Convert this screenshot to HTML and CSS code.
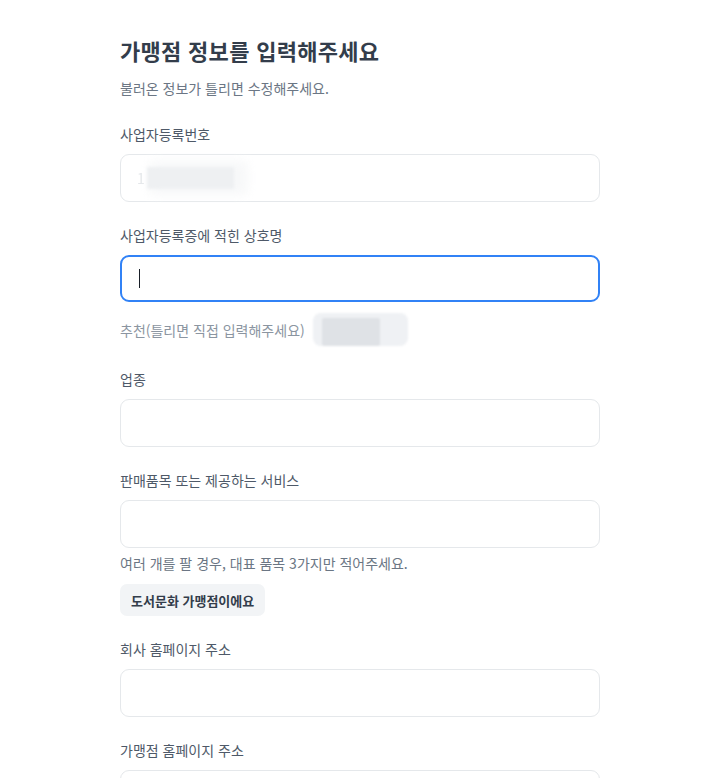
FILE: index.html
```html
<!DOCTYPE html>
<html lang="ko">
<head>
<meta charset="utf-8">
<title>가맹점 정보</title>
<link rel="stylesheet" href="styles.css">
</head>
<body>
<main class="form">
  <h1 class="title">가맹점 정보를 입력해주세요</h1>
  <p class="subtitle">불러온 정보가 틀리면 수정해주세요.</p>

  <section class="field first">
    <div class="label">사업자등록번호</div>
    <div class="input">
      <span class="masked-digit">1</span><span class="masked-block"></span>
    </div>
  </section>

  <section class="field">
    <div class="label">사업자등록증에 적힌 상호명</div>
    <div class="input focused"><span class="caret"></span></div>
    <div class="suggest">
      <span class="suggest-text">추천(틀리면 직접 입력해주세요)</span>
      <span class="suggest-chip"><span class="suggest-chip-inner"></span></span>
    </div>
  </section>

  <section class="field">
    <div class="label">업종</div>
    <div class="input"></div>
  </section>

  <section class="field">
    <div class="label">판매품목 또는 제공하는 서비스</div>
    <div class="input"></div>
    <p class="helper">여러 개를 팔 경우, 대표 품목 3가지만 적어주세요.</p>
    <button class="chip-btn" type="button">도서문화 가맹점이에요</button>
  </section>

  <section class="field">
    <div class="label">회사 홈페이지 주소</div>
    <div class="input"></div>
  </section>

  <section class="field">
    <div class="label">가맹점 홈페이지 주소</div>
    <div class="input"></div>
  </section>
</main>
</body>
</html>
```

FILE: styles.css
```css
* { box-sizing: border-box; }
html, body {
  margin: 0;
  padding: 0;
  background: #ffffff;
  font-family: "Noto Sans CJK KR", "Noto Sans", sans-serif;
}
.form {
  width: 480px;
  margin-left: 120px;
  padding-top: 35px;
  padding-bottom: 40px;
}
.title {
  margin: 0;
  font-size: 22px;
  line-height: 30px;
  font-weight: 700;
  color: #333d4b;
  letter-spacing: 0.3px;
}
.subtitle {
  margin: 13px 0 0;
  font-size: 14px;
  line-height: 20px;
  color: #6b7684;
}
.field { margin-top: 23px; }
.field.first { margin-top: 26px; }
.field.second { margin-top: 24px; }
.label {
  font-size: 14px;
  line-height: 20px;
  color: #4e5968;
  margin-bottom: 10px;
}
.input {
  height: 48px;
  border: 1px solid #e5e8eb;
  border-radius: 9px;
  background: #ffffff;
  display: flex;
  align-items: center;
  padding: 0 16px;
}
.input.focused {
  height: 47px;
  border: 2px solid #3182f6;
  padding: 0 15px;
}
.caret {
  width: 1px;
  height: 19px;
  background: #191f28;
  margin-left: 2px;
}
.masked-digit {
  font-size: 14px;
  color: #e3e6e9;
  margin-right: 2px;
  filter: blur(0.6px);
}
.masked-block {
  width: 87px;
  height: 22px;
  background: #eef0f2;
  filter: blur(1.5px);
  box-shadow: 8px 0 12px 6px #f7f8f9;
}
.suggest {
  margin-top: 11px;
  height: 33px;
  display: flex;
  align-items: center;
  gap: 8px;
}
.suggest-text {
  font-size: 14px;
  line-height: 20px;
  color: #8b95a1;
}
.suggest-chip {
  width: 95px;
  height: 33px;
  border-radius: 8px;
  background: #eff1f4;
  display: flex;
  align-items: flex-end;
  padding-left: 9px;
  filter: blur(0.8px);
}
.suggest-chip-inner {
  width: 58px;
  height: 28px;
  background: #dfe2e6;
  border-radius: 2px;
}
.helper {
  margin: 5px 0 0;
  font-size: 14px;
  line-height: 20px;
  color: #6b7684;
}
.chip-btn {
  margin-top: 11px;
  height: 32px;
  padding: 0 11px;
  border: none;
  border-radius: 7px;
  background: #f2f4f6;
  font-family: "Noto Sans CJK KR", "Noto Sans", sans-serif;
  font-size: 13px;
  font-weight: 700;
  color: #333d4b;
  display: block;
}
```
